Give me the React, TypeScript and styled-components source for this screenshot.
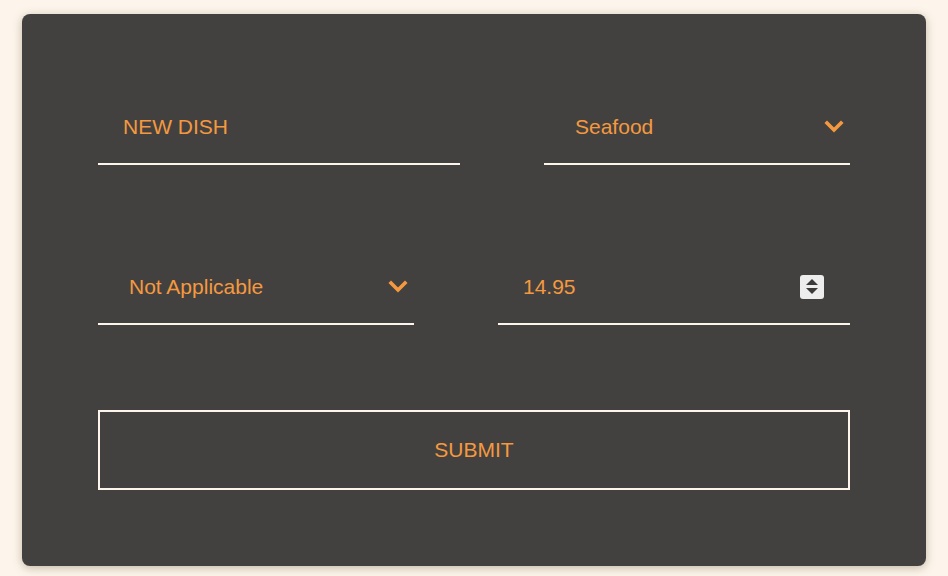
import React, { useState } from "react";
import styled, { createGlobalStyle } from "styled-components";

const GlobalStyle = createGlobalStyle`
  * { box-sizing: border-box; }
  html, body {
    margin: 0;
    padding: 0;
    background: #fdf5eb;
    font-family: "Liberation Sans", Arial, sans-serif;
  }
`;

const Page = styled.div`
  width: 948px;
  height: 576px;
  padding: 14px 22px 10px 22px;
`;

const Card = styled.form`
  width: 904px;
  height: 552px;
  background: #434140;
  border-radius: 8px;
  box-shadow: 0 2px 10px rgba(90, 70, 40, 0.35);
  padding: 76px;
  display: flex;
  flex-direction: column;
  gap: 85px;
`;

const Row = styled.div<{ $cols: string }>`
  display: grid;
  grid-template-columns: ${(p) => p.$cols};
  column-gap: 84px;
`;

const Field = styled.div`
  position: relative;
  height: 75px;
  border-bottom: 2px solid #fdf5eb;
  display: flex;
  align-items: center;
`;

const TextInput = styled.input`
  flex: 1;
  min-width: 0;
  height: 100%;
  background: transparent;
  border: none;
  outline: none;
  color: #f5993f;
  font-family: inherit;
  font-size: 21px;
  padding: 0 0 0 25px;

  &::-webkit-inner-spin-button,
  &::-webkit-outer-spin-button {
    -webkit-appearance: none;
    margin: 0;
  }
  -moz-appearance: textfield;
`;

const Select = styled.select`
  flex: 1;
  height: 100%;
  appearance: none;
  -webkit-appearance: none;
  background: transparent;
  border: none;
  outline: none;
  color: #f5993f;
  font-family: inherit;
  font-size: 21px;
  padding: 0 0 0 31px;
  cursor: pointer;

  option {
    color: #222;
  }
`;

const Chevron = styled.svg`
  position: absolute;
  right: 6px;
  top: 50%;
  margin-top: -8px;
  pointer-events: none;
`;

const Spinner = styled.span`
  width: 24px;
  height: 24px;
  margin-right: 26px;
  background: #ededed;
  border-radius: 3px;
  display: flex;
  flex-direction: column;
  align-items: center;
  justify-content: center;
  gap: 3px;
`;

const Arrow = styled.span<{ $up?: boolean }>`
  width: 0;
  height: 0;
  border-left: 6px solid transparent;
  border-right: 6px solid transparent;
  ${(p) =>
    p.$up ? "border-bottom: 6px solid #3c3b3a;" : "border-top: 6px solid #3c3b3a;"}
`;

const SubmitButton = styled.button`
  height: 80px;
  background: transparent;
  border: 2px solid #fdf5eb;
  color: #f5993f;
  font-family: inherit;
  font-size: 21px;
  cursor: pointer;
`;

const ChevronIcon = () => (
  <Chevron width="20" height="16" viewBox="0 0 20 16">
    <polyline
      points="3,4 10,11 17,4"
      fill="none"
      stroke="#f5993f"
      strokeWidth="3.6"
      strokeLinecap="square"
    />
  </Chevron>
);

export default function App() {
  const [name, setName] = useState("NEW DISH");
  const [category, setCategory] = useState("Seafood");
  const [diet, setDiet] = useState("Not Applicable");
  const [price, setPrice] = useState("14.95");

  return (
    <>
      <GlobalStyle />
      <Page>
        <Card onSubmit={(e) => e.preventDefault()}>
          <Row $cols="362px 306px">
            <Field>
              <TextInput value={name} onChange={(e) => setName(e.target.value)} />
            </Field>
            <Field>
              <Select value={category} onChange={(e) => setCategory(e.target.value)}>
                <option>Seafood</option>
                <option>Meat</option>
                <option>Vegetarian</option>
                <option>Dessert</option>
              </Select>
              <ChevronIcon />
            </Field>
          </Row>
          <Row $cols="316px 352px">
            <Field>
              <Select value={diet} onChange={(e) => setDiet(e.target.value)}>
                <option>Not Applicable</option>
                <option>Vegan</option>
                <option>Gluten Free</option>
              </Select>
              <ChevronIcon />
            </Field>
            <Field>
              <TextInput
                type="number"
                step="0.01"
                value={price}
                onChange={(e) => setPrice(e.target.value)}
              />
              <Spinner>
                <Arrow $up />
                <Arrow />
              </Spinner>
            </Field>
          </Row>
          <SubmitButton type="submit">SUBMIT</SubmitButton>
        </Card>
      </Page>
    </>
  );
}
